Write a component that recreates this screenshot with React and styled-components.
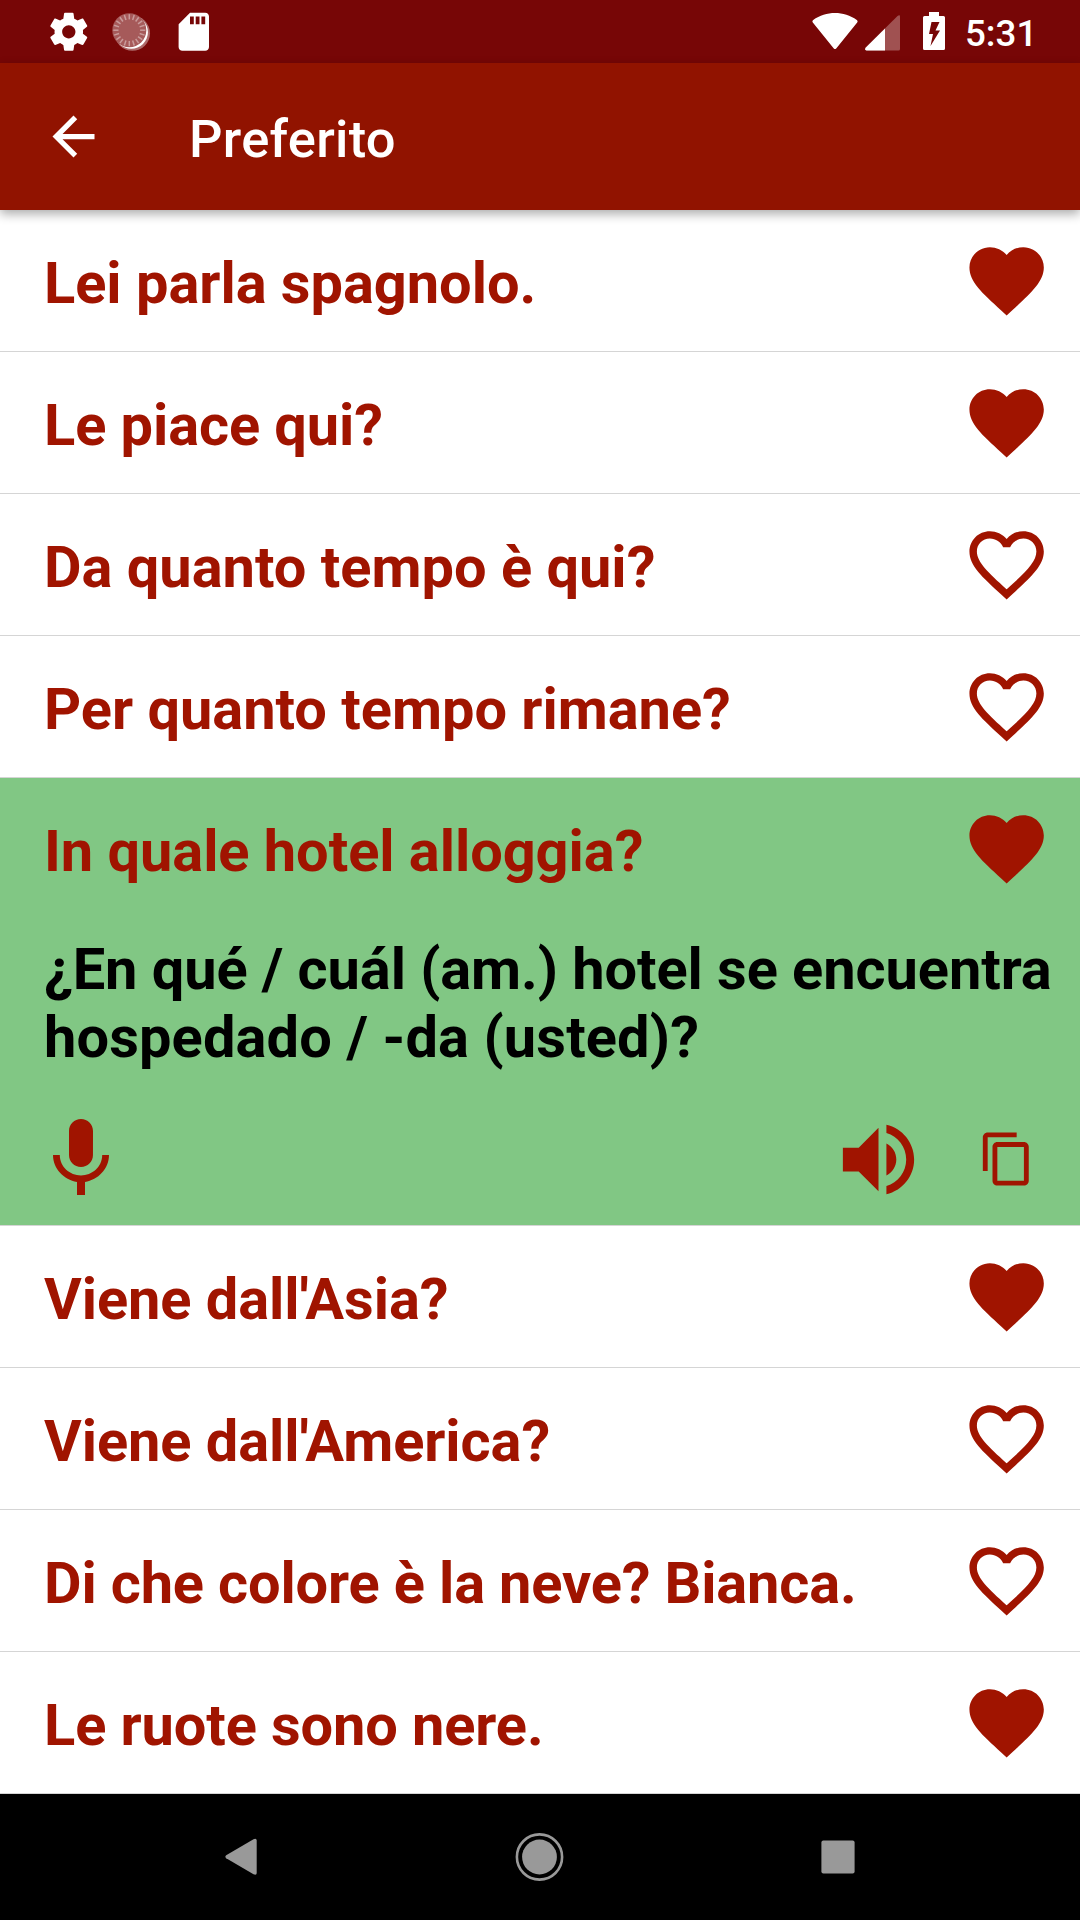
import React, { useState } from 'react';
import styled, { createGlobalStyle } from 'styled-components';

const phrases = [
    { id: 1, text: 'Lei parla spagnolo.', tracking: -0.03, favorite: true },
    { id: 2, text: 'Le piace qui?', tracking: -0.08, favorite: true },
    { id: 3, text: 'Da quanto tempo è qui?', tracking: 0, favorite: false },
    { id: 4, text: 'Per quanto tempo rimane?', tracking: -0.02, favorite: false },
    {
        id: 5,
        text: 'In quale hotel alloggia?',
        tracking: -0.05,
        translation: [
            { text: '¿En qué / cuál (am.) hotel se encuentra', tracking: -0.07 },
            { text: 'hospedado / -da (usted)?', tracking: 0.13 },
        ],
        favorite: true,
    },
    { id: 6, text: "Viene dall'Asia?", tracking: -0.06, favorite: true },
    { id: 7, text: "Viene dall'America?", tracking: -0.06, favorite: false },
    { id: 8, text: 'Di che colore è la neve? Bianca.', tracking: -0.15, favorite: false },
    { id: 9, text: 'Le ruote sono nere.', tracking: -0.11, favorite: true },
];

const paths = {
    settings: 'M19.43 12.98c.04-.32.07-.64.07-.98s-.03-.66-.07-.98l2.11-1.65c.19-.15.24-.42.12-.64l-2-3.46c-.12-.22-.39-.3-.61-.22l-2.49 1c-.52-.4-1.08-.73-1.69-.98l-.38-2.65C14.46 2.18 14.25 2 14 2h-4c-.25 0-.46.18-.49.42l-.38 2.65c-.61.25-1.17.59-1.69.98l-2.49-1c-.23-.09-.49 0-.61.22l-2 3.46c-.13.22-.07.49.12.64l2.11 1.65c-.04.32-.07.65-.07.98s.03.66.07.98l-2.11 1.65c-.19.15-.24.42-.12.64l2 3.46c.12.22.39.3.61.22l2.49-1c.52.4 1.08.73 1.69.98l.38 2.65c.03.24.24.42.49.42h4c.25 0 .46-.18.49-.42l.38-2.65c.61-.25 1.17-.59 1.69-.98l2.49 1c.23.09.49 0 .61-.22l2-3.46c.12-.22.07-.49-.12-.64l-2.11-1.65zM12 15.5c-1.93 0-3.5-1.57-3.5-3.5s1.57-3.5 3.5-3.5 3.5 1.57 3.5 3.5-1.57 3.5-3.5 3.5z',
    sdCard: 'M18 2h-8L4.02 8 4 20c0 1.1.9 2 2 2h12c1.1 0 2-.9 2-2V4c0-1.1-.9-2-2-2zm-6 6h-2V4h2v4zm3 0h-2V4h2v4zm3 0h-2V4h2v4z',
    back: 'M20 11H7.83l5.59-5.59L12 4l-8 8 8 8 1.41-1.41L7.83 13H20v-2z',
    heart: 'M12 21.35l-1.45-1.32C5.4 15.36 2 12.28 2 8.5 2 5.42 4.42 3 7.5 3c1.74 0 3.41.81 4.5 2.09C13.09 3.81 14.76 3 16.5 3 19.58 3 22 5.42 22 8.5c0 3.78-3.4 6.86-8.55 11.54L12 21.35z',
    heartOutline: 'M16.5 3c-1.74 0-3.41.81-4.5 2.09C10.91 3.81 9.24 3 7.5 3 4.42 3 2 5.42 2 8.5c0 3.78 3.4 6.86 8.55 11.54L12 21.35l1.45-1.32C18.6 15.36 22 12.28 22 8.5 22 5.42 19.58 3 16.5 3zm-4.4 15.55l-.1.1-.1-.1C7.14 14.24 4 11.39 4 8.5 4 6.5 5.5 5 7.5 5c1.54 0 3.04.99 3.57 2.36h1.87C13.46 5.99 14.96 5 16.5 5c2 0 3.5 1.5 3.5 3.5 0 2.89-3.14 5.74-7.9 10.05z',
    mic: 'M12 14c1.66 0 2.99-1.34 2.99-3L15 5c0-1.66-1.34-3-3-3S9 3.34 9 5v6c0 1.66 1.34 3 3 3zm5.3-3c0 3-2.54 5.1-5.3 5.1S6.7 14 6.7 11H5c0 3.41 2.72 6.23 6 6.72V21h2v-3.28c3.28-.48 6-3.3 6-6.72h-1.7z',
    volume: 'M3 9v6h4l5 5V4L7 9H3zm13.5 3c0-1.77-1.02-3.29-2.5-4.03v8.05c1.48-.73 2.5-2.25 2.5-4.02zM14 3.23v2.06c2.89.86 5 3.54 5 6.71s-2.11 5.85-5 6.71v2.06c4.01-.91 7-4.49 7-8.77s-2.99-7.86-7-8.77z',
    copy: 'M16 1H4c-1.1 0-2 .9-2 2v14h2V3h12V1zm3 4H8c-1.1 0-2 .9-2 2v14c0 1.1.9 2 2 2h11c1.1 0 2-.9 2-2V7c0-1.1-.9-2-2-2zm0 16H8V7h11v14z',
};

function Icon({ name, size }) {
    return (
        <svg width={size} height={size} viewBox="0 0 24 24" fill="currentColor">
            <path d={paths[name]} />
        </svg>
    );
}

function SyncIcon() {
    const ticks = Array.from({ length: 20 }, (_, i) => i * 18);
    return (
        <svg width="40" height="40" viewBox="0 0 40 40">
            <circle cx="21.4" cy="21.2" r="17.6" fill="#fff" opacity=".4" />
            <circle cx="20.3" cy="20.2" r="16.6" fill="#fff" />
            <circle cx="18.3" cy="18.2" r="17" fill="#a65a5a" />
            {ticks.map(angle => (
                <line
                    key={angle}
                    x1="18.3"
                    y1="2.2"
                    x2="18.3"
                    y2="7.4"
                    stroke="#c99b9b"
                    strokeWidth="1.5"
                    transform={`rotate(${angle} 18.3 18.2)`}
                />
            ))}
        </svg>
    );
}

function StatusBar() {
    return (
        <StatusBarStyled>
            <div className="notifications">
                <Icon name="settings" size={45.6} />
                <SyncIcon />
                <Icon name="sdCard" size={45.6} />
            </div>
            <div className="system">
                <svg width="46" height="37" viewBox="0 0 46 37" fill="#fff">
                    <path d="M.8 9.6Q-.2 8 1.2 7C14-2.3 32-2.3 44.8 7q1.4 1 .4 2.6L24.2 35.4q-1.2 1.2-2.4 0z" />
                </svg>
                <svg width="35" height="36" viewBox="0 0 35 36" fill="#fff">
                    <path d="M35 1.5V34q0 1.5-1.5 1.5H1.5Q-1 35 .8 32.6L32.5.9Q35-.8 35 1.5z" opacity=".3" />
                    <path d="M20 13.4V35.5H1.5Q-1 35 .8 32.6z" />
                </svg>
                <svg width="22" height="38" viewBox="0 0 22 38" fill="#fff" fillRule="evenodd">
                    <path d="M6 0h10v4h4.5Q22 4 22 5.5V36.5Q22 38 20.5 38H1.5Q0 38 0 36.5V5.5Q0 4 1.5 4H6zM8.5 10L6 22h4L7.5 34 17 18.5h-4.5L16.5 10z" />
                </svg>
                <span>5:31</span>
            </div>
        </StatusBarStyled>
    );
}

function Phrase({ phrase, onToggle }) {
    const { text, tracking, translation, favorite } = phrase;

    return (
        <PhraseStyled $open={!!translation}>
            <div className="phrase">
                <PhraseText $tracking={tracking}>{text}</PhraseText>
                <IconButton onClick={onToggle}>
                    <Icon name={favorite ? 'heart' : 'heartOutline'} size={89.25} />
                </IconButton>
            </div>
            {translation && (
                <>
                    <div className="translation">
                        {translation.map(line => (
                            <PhraseText key={line.text} $tracking={line.tracking}>{line.text}</PhraseText>
                        ))}
                    </div>
                    <div className="actions">
                        <IconButton><Icon name="mic" size={96} /></IconButton>
                        <div className="right">
                            <IconButton><Icon name="volume" size={95} /></IconButton>
                            <IconButton><Icon name="copy" size={58} /></IconButton>
                        </div>
                    </div>
                </>
            )}
        </PhraseStyled>
    );
}

function NavBar() {
    return (
        <NavBarStyled>
            <svg width="32" height="38" viewBox="0 0 32 38" fill="#999">
                <path d="M1.2 17.2L28.5 1.2Q31.700 0 31.7 2.5V35Q31.7 37.6 28.5 36.3L1.2 20.3Q-.5 18.7 1.2 17.2z" />
            </svg>
            <svg width="50" height="50" viewBox="0 0 50 50" fill="#999">
                <circle cx="25.5" cy="25" r="22.6" fill="none" stroke="#999" strokeWidth="2.6" />
                <circle cx="25.5" cy="25" r="17.4" />
            </svg>
            <svg width="34" height="34" viewBox="0 0 34 34" fill="#999">
                <rect x=".4" y=".4" width="33.2" height="33.2" rx="2" />
            </svg>
        </NavBarStyled>
    );
}

function App() {
    const [items, setItems] = useState(phrases);

    const toggleFavorite = id => () => {
        setItems(items.map(item => (item.id === id ? { ...item, favorite: !item.favorite } : item)));
    };

    return (
        <AppStyled>
            <GlobalStyle />
            <StatusBar />
            <HeaderStyled>
                <IconButton><Icon name="back" size={63} /></IconButton>
                <h1>Preferito</h1>
            </HeaderStyled>
            <main>
                {items.map(item => (
                    <Phrase key={item.id} phrase={item} onToggle={toggleFavorite(item.id)} />
                ))}
            </main>
            <NavBar />
        </AppStyled>
    );
}

const GlobalStyle = createGlobalStyle`
    * {
        margin: 0;
        padding: 0;
        box-sizing: border-box;
    }
    body {
        font-family: Roboto, sans-serif;
        background: #fff;
    }
    svg {
        display: block;
        flex-shrink: 0;
    }
`;

const AppStyled = styled.div`
    display: flex;
    flex-direction: column;
    width: 1080px;
    height: 1920px;
    overflow: hidden;
    main {
        flex: 1;
    }
`;

const IconButton = styled.button`
    display: flex;
    border: none;
    background: none;
    color: inherit;
    cursor: pointer;
`;

const StatusBarStyled = styled.div`
    display: flex;
    justify-content: space-between;
    height: 63px;
    padding: 0 42.7px 0 45.6px;
    background: #770606;
    color: #fff;
    .notifications {
        display: flex;
        align-items: center;
        gap: 20px;
    }
    .system {
        display: flex;
        align-items: center;
        svg:nth-child(2) {
            margin: 2px 23px 0 7px;
        }
        svg:nth-child(3) {
            margin-bottom: 1px;
        }
    }
    span {
        margin: 3px 0 0 20px;
        font-size: 36.75px;
        font-weight: 500;
    }
`;

const HeaderStyled = styled.header`
    position: relative;
    display: flex;
    align-items: center;
    gap: 84px;
    height: 147px;
    padding: 0 42px;
    background: #911300;
    color: #fff;
    box-shadow: 0 4px 10px rgba(0, 0, 0, 0.33);
    h1 {
        padding-top: 4px;
        font-size: 52.5px;
        font-weight: 500;
        letter-spacing: 0.28px;
    }
`;

const PhraseText = styled.p`
    letter-spacing: ${props => props.$tracking}px;
    white-space: nowrap;
`;

const PhraseStyled = styled.article`
    height: ${props => (props.$open ? '448px' : '142px')};
    border-bottom: 1px solid #d5d5d5;
    background: ${props => (props.$open ? '#81c784' : '#fff')};
    color: #a01400;
    font-size: 57.75px;
    font-weight: 700;
    line-height: 68px;
    .phrase {
        display: flex;
        justify-content: space-between;
        align-items: center;
        height: 141px;
        padding: 0 29px 0 44px;
        p {
            padding-top: 4px;
        }
    }
    .translation {
        padding: 16px 20px 0 44px;
        color: #000;
    }
    .actions {
        display: flex;
        justify-content: space-between;
        align-items: center;
        padding: 40.4px 44px 0 33px;
    }
    .right {
        display: flex;
        align-items: center;
        gap: 52px;
    }
`;

const NavBarStyled = styled.nav`
    display: flex;
    justify-content: space-between;
    align-items: center;
    height: 126px;
    padding: 0 225px;
    background: #000;
`;

export default App;
